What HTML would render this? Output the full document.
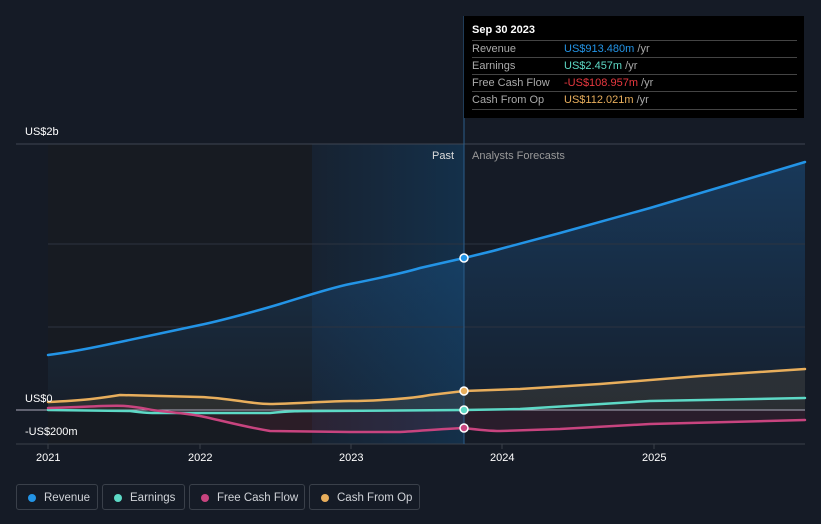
<!DOCTYPE html>
<html><head><style>
body{margin:0;width:821px;height:524px;background:#151b26;font-family:"Liberation Sans",sans-serif;overflow:hidden;position:relative}
.t{position:absolute;color:#fff;font-size:11px}
.tip{position:absolute;left:464px;top:16px;width:340px;height:102px;background:#000;}
.tip .h{position:absolute;left:8px;top:8px;color:#fff;font-size:11px;font-weight:bold}
.row{position:absolute;left:8px;width:325px;height:17px;border-top:1px solid #444;font-size:11px;color:#aaa;line-height:17px}
.row span{position:absolute;left:92px}
.leg{position:absolute;top:484px;height:26px;border:1px solid #3a404a;border-radius:3px;color:#d0d3d8;font-size:11.5px;line-height:26px;box-sizing:border-box}
.leg i{position:absolute;left:11px;top:9px;width:8px;height:8px;border-radius:50%}
.leg b{font-weight:normal;position:absolute;left:27px}
</style></head><body>
<svg width="821" height="524" style="position:absolute;left:0;top:0">
<defs>
<linearGradient id="rg" x1="0" y1="0" x2="0" y2="1"><stop offset="0" stop-color="#1e6fb8" stop-opacity=".35"/><stop offset="1" stop-color="#1e6fb8" stop-opacity=".05"/></linearGradient>
<linearGradient id="pg" x1="0" y1="0" x2="1" y2="0"><stop offset="0" stop-color="#172231"/><stop offset="1" stop-color="#14304a"/></linearGradient>
</defs>
<rect x="48" y="144" width="264" height="300" fill="#171b22"/>
<rect x="312" y="144" width="152" height="300" fill="url(#pg)"/>
<path d="M48,355 C80,351 100,346 120,342 S180,329 200,325 S260,310 280,304 S330,288 350,284 S400,274 420,268 L464,258 C480,254 490,252 500,249 L560,233 L650,208 L805,162 L805,410 L48,410Z" fill="url(#rg)"/>
<path d="M48,402 C90,400 100,398 120,395 L200,397 C230,398 250,404 270,404 S330,401 350,401 S410,399 430,395 L464,391 L520,389 L600,384 L700,376 L805,369 L805,410 L48,410Z" fill="#c9a05a" fill-opacity=".12"/>
<path d="M48,410 L160,411 C200,416 240,424 270,431 L350,432 L400,432 C420,431 440,429 464,428 C480,430 490,431 500,431 L560,429 L650,424 L805,420 L805,410Z" fill="#a0304a" fill-opacity=".15"/>
<g stroke="#2c3340" stroke-width="1"><line x1="48" y1="244" x2="805" y2="244"/><line x1="48" y1="327" x2="805" y2="327"/></g>
<line x1="16" y1="144" x2="805" y2="144" stroke="#3e4653"/>
<line x1="16" y1="410" x2="805" y2="410" stroke="#aab" stroke-width="1"/>
<line x1="16" y1="444" x2="805" y2="444" stroke="#3a404a"/>
<g stroke="#3a404a"><line x1="48" y1="444" x2="48" y2="449"/><line x1="200" y1="444" x2="200" y2="449"/><line x1="351" y1="444" x2="351" y2="449"/><line x1="502" y1="444" x2="502" y2="449"/><line x1="654" y1="444" x2="654" y2="449"/></g>
<line x1="464" y1="16" x2="464" y2="444" stroke="#2a5d8a" stroke-width="1"/>
<g fill="none" stroke-width="2.5" stroke-linecap="round">
<path d="M48,355 C80,351 100,346 120,342 S180,329 200,325 S260,310 280,304 S330,288 350,284 S400,274 420,268 L464,258 C480,254 490,252 500,249 L560,233 L650,208 L805,162" stroke="#2394e6"/>
<path d="M48,402 C90,400 100,398 120,395 L200,397 C230,398 250,404 270,404 S330,401 350,401 S410,399 430,395 L464,391 L520,389 L600,384 L700,376 L805,369" stroke="#e8ae5c"/>
<path d="M48,410 L130,411 C145,413 150,413 160,413 L270,413 C290,411 300,411 320,411 L464,410 L520,409 L650,401 L805,398" stroke="#5dd9c6"/>
<path d="M48,408 C90,407 110,405 125,406 C140,407 150,410 160,411 C180,413 190,414 200,416 C220,420 240,426 270,431 L350,432 L400,432 C420,431 440,429 464,428 C480,430 490,431 500,431 L560,429 L650,424 L805,420" stroke="#c8447f"/>
</g>
<g stroke="#fff" stroke-width="1.5"><circle cx="464" cy="258" r="4" fill="#2394e6"/><circle cx="464" cy="391" r="4" fill="#e8ae5c"/><circle cx="464" cy="410" r="4" fill="#5dd9c6"/><circle cx="464" cy="428" r="4" fill="#c8447f"/></g>
</svg>
<div class="t" style="left:25px;top:126px">US$2b</div>
<div class="t" style="left:25px;top:393px">US$0</div>
<div class="t" style="left:25px;top:426px">-US$200m</div>
<div class="t" style="left:432px;top:150px;color:#ddd">Past</div>
<div class="t" style="left:472px;top:150px;color:#999">Analysts Forecasts</div>
<div class="t" style="left:36px;top:452px">2021</div>
<div class="t" style="left:188px;top:452px">2022</div>
<div class="t" style="left:339px;top:452px">2023</div>
<div class="t" style="left:490px;top:452px">2024</div>
<div class="t" style="left:642px;top:452px">2025</div>
<div class="tip"><div class="h">Sep 30 2023</div>
<div class="row" style="top:24px">Revenue<span style="color:#2394e6">US$913.480m <em style="font-style:normal;color:#aaa">/yr</em></span></div>
<div class="row" style="top:41px">Earnings<span style="color:#5dd9c6">US$2.457m <em style="font-style:normal;color:#aaa">/yr</em></span></div>
<div class="row" style="top:58px">Free Cash Flow<span style="color:#e8383f">-US$108.957m <em style="font-style:normal;color:#aaa">/yr</em></span></div>
<div class="row" style="top:75px;border-bottom:1px solid #444">Cash From Op<span style="color:#e8ae5c">US$112.021m <em style="font-style:normal;color:#aaa">/yr</em></span></div>
</div>
<div class="leg" style="left:16px;width:82px"><i style="background:#2394e6"></i><b>Revenue</b></div>
<div class="leg" style="left:102px;width:83px"><i style="background:#5dd9c6"></i><b>Earnings</b></div>
<div class="leg" style="left:189px;width:116px"><i style="background:#c8447f"></i><b>Free Cash Flow</b></div>
<div class="leg" style="left:309px;width:111px"><i style="background:#e8ae5c"></i><b>Cash From Op</b></div>
</body></html>
